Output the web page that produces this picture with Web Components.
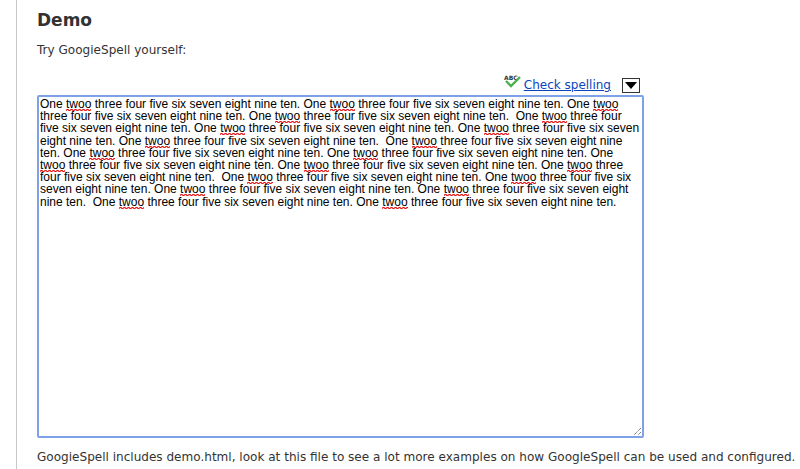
<!DOCTYPE html>
<html>
<head>
<meta charset="utf-8">
<title>GoogieSpell demo</title>
<style>
  html, body { margin: 0; padding: 0; background: #fff; overflow: hidden; }
</style>
</head>
<body>
<template id="demo-page-tpl">
  <style>
    :host {
      display: block;
      height: 469px;
      margin-left: 16px;
      padding-left: 20px;
      border-left: 1px solid #c8c8c8;
      box-sizing: border-box;
      font: 12.06px/18px "DejaVu Sans", Verdana, sans-serif;
      color: #333;
    }
    h2 { margin: 0; padding-top: 11px; font-size: 17px; line-height: 18px; font-weight: bold; color: #333; }
    p { margin: 0; }
    .intro { margin-top: 12px; }
    .outro { margin-top: 10px; white-space: nowrap; }
  </style>
  <h2><slot name="title"></slot></h2>
  <p class="intro"><slot name="intro"></slot></p>
  <slot></slot>
  <p class="outro"><slot name="outro"></slot></p>
</template>

<template id="spell-box-tpl">
  <style>
    :host { display: block; width: 607px; margin-top: 14px; }
    .bar {
      display: flex;
      justify-content: flex-end;
      align-items: center;
      box-sizing: border-box;
      height: 20px;
      padding: 4px 4px 0 0;
      font: 12px "DejaVu Sans", Verdana, sans-serif;
    }
    .check { display: block; margin-right: 3px; margin-top: -8px; }
    a { text-decoration: underline; color: #0a45bc; }
    .drop {
      width: 16px;
      height: 13px;
      margin-left: 11px;
      border: 1px solid #333;
      background: #fff;
      display: flex;
      align-items: center;
      justify-content: center;
    }
    .area {
      box-sizing: border-box;
      height: 343px;
      margin-top: 2px;
      padding: 1px;
      border: 2px solid #7da2e8;
      border-radius: 2px;
      position: relative;
      font: 12px/12.2px "Liberation Sans", Arial, sans-serif;
      color: #000;
      white-space: pre-wrap;
      overflow: hidden;
    }
    .grip { position: absolute; right: 0; bottom: 0; }
  </style>
  <div class="bar">
    <svg class="check" width="17" height="14" viewBox="0 0 17 14">
      <text x="0" y="6" font-family="'DejaVu Sans', sans-serif" font-size="6" font-weight="bold" fill="#333">ABC</text>
      <path d="M2 7 L7 12 L16 3" fill="none" stroke="#4caf50" stroke-width="2.4"/>
    </svg>
    <a href="#"><slot name="action"></slot></a>
    <div class="drop">
      <svg width="12" height="7" viewBox="0 0 12 7"><path d="M0 0H12L6 7Z" fill="#000"/></svg>
    </div>
  </div>
  <div class="area"><slot></slot><svg class="grip" width="10" height="10" viewBox="0 0 10 10"><path d="M9 2 L2 9 M9 6 L6 9" stroke="#666" stroke-width="1" stroke-dasharray="1.2 .6" fill="none"/></svg></div>
</template>

<template id="spell-error-tpl"><style>
    :host {
      display: inline;
      /* vaguelette rouge sous le mot, juste sous la ligne de base */
      background: url("data:image/svg+xml,%3Csvg xmlns='http://www.w3.org/2000/svg' width='4' height='2'%3E%3Cpath d='M0 1.5 L1 0.5 L2 0.5 L3 1.5 L4 1.5' fill='none' stroke='%23e81010' stroke-width='1.1'/%3E%3C/svg%3E") repeat-x left bottom;
    }
  </style><slot></slot></template>

<demo-page>
  <span slot="title">Demo</span>
  <span slot="intro">Try GoogieSpell yourself:</span>
  <spell-box id="box"><span slot="action">Check spelling</span></spell-box>
  <span slot="outro">GoogieSpell includes demo.html, look at this file to see a lot more examples on how GoogleSpell can be used and configured.</span>
</demo-page>

<script>
  // petit helper pour les composants, chacun avec son template
  function defineFromTemplate(name, tplId) {
    customElements.define(name, class extends HTMLElement {
      constructor() {
        super();
        this.attachShadow({ mode: 'open' });
        this.shadowRoot.appendChild(document.getElementById(tplId).content.cloneNode(true));
      }
    });
  }
  defineFromTemplate('demo-page', 'demo-page-tpl');
  defineFromTemplate('spell-box', 'spell-box-tpl');
  defineFromTemplate('spell-error', 'spell-error-tpl');

  // le texte du demo : 20 phrases, double espace apres certaines
  const box = document.getElementById('box');
  const addText = (t) => box.appendChild(document.createTextNode(t));
  const doubles = [4, 8, 14, 18];
  for (let i = 1; i <= 20; i++) {
    addText('One ');
    const err = document.createElement('spell-error');
    err.textContent = 'twoo';
    box.appendChild(err);
    addText(' three four five six seven eight nine ten.');
    if (i < 20) addText(doubles.includes(i) ? '  ' : ' ');
  }
</script>
</body>
</html>
